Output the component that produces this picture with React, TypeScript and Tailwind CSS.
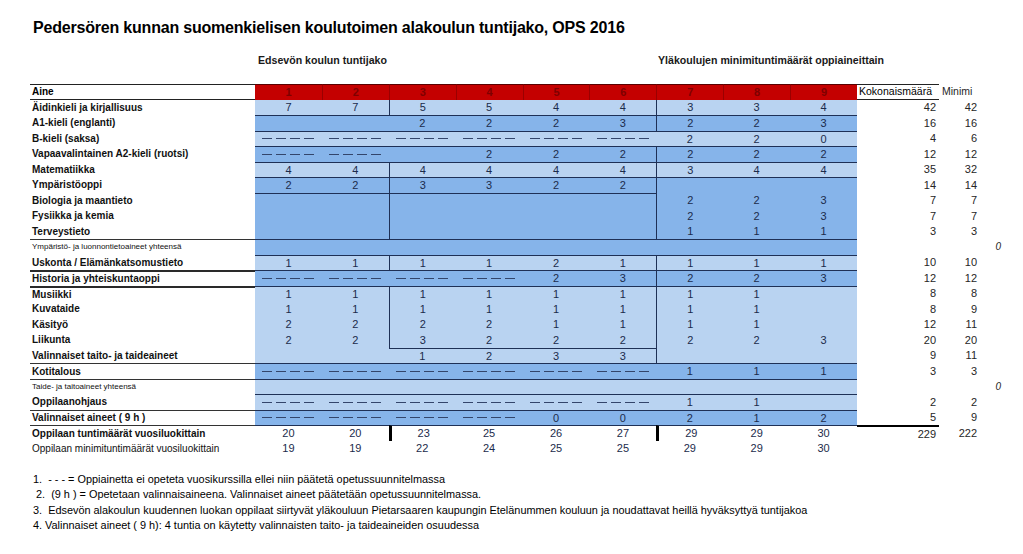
import React from "react";

type Row = {
  label: string;
  ls?: "b" | "s" | "n";
  lt?: "t" | "k";
  bg: "L" | "M" | "W";
  vals: string[];
  top: "all" | "none" | "c16" | "c36";
  v3?: boolean;
  v7?: boolean;
  kok?: string;
  min?: string;
  zero?: boolean;
  totals?: boolean;
};

const D = "-";

const rows: Row[] = [
  { label: "Äidinkieli ja kirjallisuus", bg: "L", vals: ["7", "7", "5", "5", "4", "4", "3", "3", "4"], top: "none", v3: true, v7: true, kok: "42", min: "42" },
  { label: "A1-kieli (englanti)", bg: "M", vals: ["", "", "2", "2", "2", "3", "2", "2", "3"], top: "all", v7: true, kok: "16", min: "16" },
  { label: "B-kieli (saksa)", bg: "L", vals: [D, D, D, D, D, D, "2", "2", "0"], top: "all", kok: "4", min: "6" },
  { label: "Vapaavalintainen A2-kieli (ruotsi)", bg: "M", vals: [D, D, "", "2", "2", "2", "2", "2", "2"], top: "all", v7: true, kok: "12", min: "12" },
  { label: "Matematiikka", bg: "L", vals: ["4", "4", "4", "4", "4", "4", "3", "4", "4"], top: "all", v3: true, v7: true, kok: "35", min: "32" },
  { label: "Ympäristöoppi", bg: "M", vals: ["2", "2", "3", "3", "2", "2", "", "", ""], top: "all", v3: true, v7: true, kok: "14", min: "14" },
  { label: "Biologia ja maantieto", bg: "M", vals: ["", "", "", "", "", "", "2", "2", "3"], top: "c16", v3: true, v7: true, kok: "7", min: "7" },
  { label: "Fysiikka ja kemia", bg: "M", vals: ["", "", "", "", "", "", "2", "2", "3"], top: "none", v3: true, v7: true, kok: "7", min: "7" },
  { label: "Terveystieto", bg: "M", vals: ["", "", "", "", "", "", "1", "1", "1"], top: "none", v3: true, v7: true, kok: "3", min: "3" },
  { label: "Ympäristö- ja luonnontietoaineet yhteensä", ls: "s", lt: "t", bg: "M", vals: ["", "", "", "", "", "", "", "", ""], top: "all", zero: true },
  { label: "Uskonta / Elämänkatsomustieto", bg: "L", vals: ["1", "1", "1", "1", "2", "1", "1", "1", "1"], top: "all", v3: true, v7: true, kok: "10", min: "10" },
  { label: "Historia ja yhteiskuntaoppi", lt: "k", bg: "M", vals: [D, D, D, D, "2", "3", "2", "2", "3"], top: "all", v7: true, kok: "12", min: "12" },
  { label: "Musiikki", lt: "k", bg: "L", vals: ["1", "1", "1", "1", "1", "1", "1", "1", ""], top: "all", v3: true, v7: true, kok: "8", min: "8" },
  { label: "Kuvataide", bg: "L", vals: ["1", "1", "1", "1", "1", "1", "1", "1", ""], top: "none", v3: true, v7: true, kok: "8", min: "9" },
  { label: "Käsityö", bg: "L", vals: ["2", "2", "2", "2", "1", "1", "1", "1", ""], top: "none", v3: true, v7: true, kok: "12", min: "11" },
  { label: "Liikunta", bg: "L", vals: ["2", "2", "3", "2", "2", "2", "2", "2", "3"], top: "none", v3: true, v7: true, kok: "20", min: "20" },
  { label: "Valinnaiset taito- ja taideaineet", bg: "L", vals: ["", "", "1", "2", "3", "3", "", "", ""], top: "c36", v7: true, kok: "9", min: "11" },
  { label: "Kotitalous", lt: "t", bg: "M", vals: [D, D, D, D, D, D, "1", "1", "1"], top: "all", kok: "3", min: "3" },
  { label: "Taide- ja taitoaineet yhteensä", ls: "s", lt: "t", bg: "L", vals: ["", "", "", "", "", "", "", "", ""], top: "all", zero: true },
  { label: "Oppilaanohjaus", bg: "L", vals: [D, D, D, D, D, D, "1", "1", ""], top: "all", kok: "2", min: "2" },
  { label: "Valinnaiset aineet ( 9 h  )", lt: "t", bg: "M", vals: [D, D, D, D, "0", "0", "2", "1", "2"], top: "all", kok: "5", min: "9" },
  { label: "Oppilaan tuntimäärät vuosiluokittain", lt: "t", bg: "W", vals: ["20", "20", "23", "25", "26", "27", "29", "29", "30"], top: "all", kok: "229", min: "222", totals: true },
  { label: "Oppilaan minimituntimäärät vuosiluokittain", ls: "n", bg: "W", vals: ["19", "19", "22", "24", "25", "25", "29", "29", "30"], top: "none" },
];

function Dashes() {
  return (
    <div className="flex gap-[4px]">
      <span className="block h-[1.3px] w-[10px] bg-[#33456b]" />
      <span className="block h-[1.3px] w-[10px] bg-[#33456b]" />
      <span className="block h-[1.3px] w-[10px] bg-[#33456b]" />
      <span className="block h-[1.3px] w-[10px] bg-[#33456b]" />
    </div>
  );
}

function TableRow({ r }: { r: Row }) {
  const labelCls =
    r.ls === "s"
      ? "text-[8px] font-normal"
      : r.ls === "n"
      ? "text-[10px] font-normal"
      : "text-[10px] font-bold";
  const labelBorder =
    r.lt === "k" ? "border-t-[2px] border-[#2a2a2a]" : r.lt === "t" ? "border-t border-[#333]" : "";
  return (
    <div className="flex h-[15.5px]">
      <div className={`flex w-[225px] items-center pl-[2px] text-[#111] ${labelCls} ${labelBorder}`}>
        <span className="whitespace-nowrap">{r.label}</span>
      </div>
      {r.vals.map((v, i) => {
        const bg = r.bg === "L" ? "bg-[#b9d3f1]" : r.bg === "M" ? "bg-[#86b4ea]" : "bg-white";
        const hasTop =
          r.top === "all" || (r.top === "c16" && i < 6) || (r.top === "c36" && i >= 2 && i < 6);
        const top = hasTop ? "border-t border-t-[#1e3056]" : "";
        let left = "";
        if (r.totals && (i === 2 || i === 6)) left = "border-l-[3px] border-l-black";
        else if ((i === 2 && r.v3) || (i === 6 && r.v7)) left = "border-l border-l-[#1e3056]";
        return (
          <div
            key={i}
            className={`flex w-[66.9px] items-center justify-center text-[11px] text-[#1b2b4b] ${bg} ${top} ${left}`}
          >
            {v === D ? <Dashes /> : v}
          </div>
        );
      })}
      <div
        className={`flex w-[82px] items-center justify-end pr-[3px] text-[11px] text-[#262626] ${
          r.totals ? "border-t-[2px] border-t-black" : ""
        }`}
      >
        {r.kok}
      </div>
      <div className="flex w-[38px] items-center justify-end text-[11px] text-[#262626]">{r.min}</div>
      <div className="flex w-[24px] items-center justify-end text-[10px] italic text-[#262626]">
        {r.zero ? "0" : ""}
      </div>
    </div>
  );
}

export default function App() {
  return (
    <div className="relative h-[554px] w-[1023px] overflow-hidden bg-white font-['Liberation_Sans',Arial,sans-serif] text-black">
      <div className="pl-[33px] pt-[18px] text-[16px] font-bold leading-[20px] tracking-[-0.2px]">
        Pedersören kunnan suomenkielisen koulutoimen alakoulun tuntijako, OPS 2016
      </div>
      <div className="mt-[16px] flex h-[14px] items-center text-[10.6px] font-bold text-[#1a1a1a]">
        <span className="ml-[258px] w-[400px]">Edsevön koulun tuntijako</span>
        <span>Yläkoulujen minimituntimäärät oppiaineittain</span>
      </div>
      <div className="ml-[30px] mt-[16px]">
        <div className="flex h-[15.5px]">
          <div className="flex w-[225px] items-center border-y border-[#222] pl-[2px] text-[10px] font-bold">
            Aine
          </div>
          {["1", "2", "3", "4", "5", "6", "7", "8", "9"].map((n, i) => (
            <div
              key={n}
              className={`flex w-[66.9px] items-center justify-center border-t border-t-[#5a0000] bg-[#c40000] text-[11px] font-bold text-[#7e0000] ${
                i > 0 ? "border-l border-l-[#9a0000]" : ""
              }`}
            >
              {n}
            </div>
          ))}
          <div className="flex w-[82px] items-center border-y border-[#222] pl-[2px] text-[10.5px] text-black">
            Kokonaismäärä
          </div>
          <div className="flex w-[38px] items-center pl-[3px] text-[10.5px] text-[#262626]">Minimi</div>
        </div>
        {rows.map((r, i) => (
          <TableRow key={i} r={r} />
        ))}
      </div>
      <div className="ml-[33px] mt-[16px] flex flex-col text-[10.9px] leading-[15.3px] text-black">
        <div className="whitespace-pre">1.  - - - = Oppiainetta ei opeteta vuosikurssilla ellei niin päätetä opetussuunnitelmassa</div>
        <div className="whitespace-pre"> 2.  (9 h ) = Opetetaan valinnaisaineena. Valinnaiset aineet päätetään opetussuunnitelmassa.</div>
        <div className="whitespace-pre">3.  Edsevön alakoulun kuudennen luokan oppilaat siirtyvät yläkouluun Pietarsaaren kaupungin Etelänummen kouluun ja noudattavat heillä hyväksyttyä tuntijakoa</div>
        <div className="whitespace-pre">4. Valinnaiset aineet ( 9 h): 4 tuntia on käytetty valinnaisten taito- ja taideaineiden osuudessa</div>
      </div>
    </div>
  );
}
